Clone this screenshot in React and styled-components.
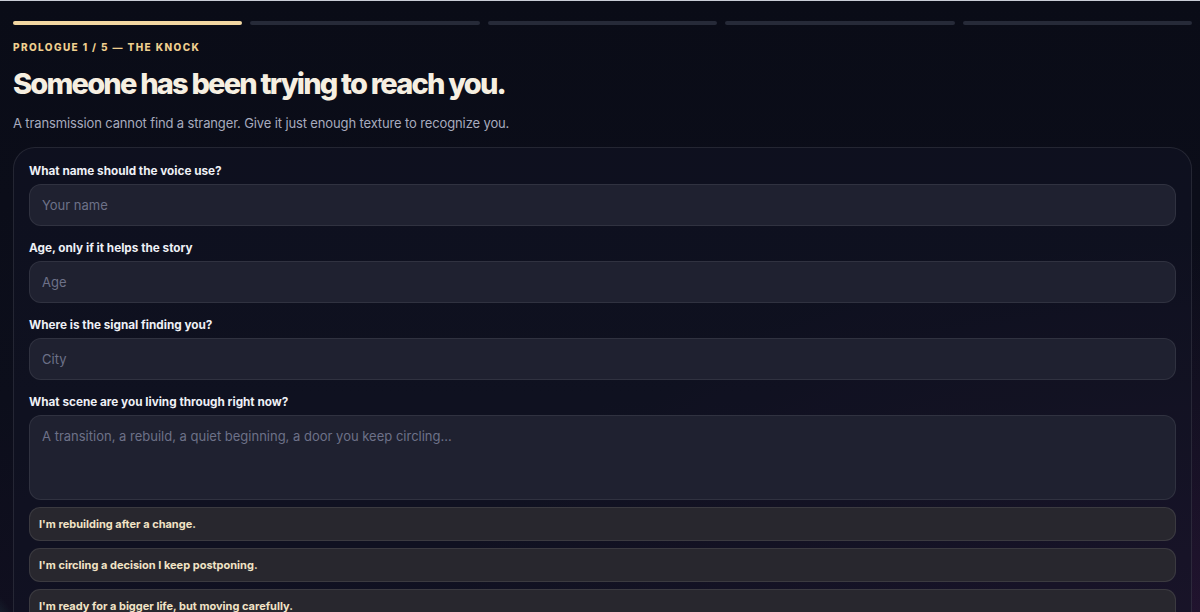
import React from "react";
import styled, { createGlobalStyle } from "styled-components";

const GlobalStyle = createGlobalStyle`
  html, body {
    margin: 0;
    height: 100%;
    background: #0a0c17;
  }
  body {
    border-top: 1px solid #c9ccd6;
    overflow: hidden;
    font-family: Inter, "Noto Sans", sans-serif;
    -webkit-font-smoothing: antialiased;
  }
  * {
    box-sizing: border-box;
  }
`;

const Page = styled.div`
  min-height: 611px;
  padding: 20px 8px 0 13px;
  background:
    radial-gradient(circle at -40px 640px, rgba(70, 150, 140, 0.55) 0, rgba(70, 150, 140, 0) 60px),
    radial-gradient(ellipse at 100% 100%, rgba(70, 30, 80, 0.35) 0, rgba(70, 30, 80, 0) 45%),
    linear-gradient(180deg, #0a0c17 0%, #0c0e1b 60%, #110f20 100%);
`;

const Progress = styled.div`
  display: grid;
  grid-template-columns: repeat(5, 1fr);
  gap: 8px;
`;

const Segment = styled.div`
  height: 4px;
  border-radius: 2px;
  background: ${(p) => (p.$active ? "#f2d7a2" : "#262a38")};
`;

const Eyebrow = styled.p`
  margin: 16px 0 0;
  font-size: 10px;
  line-height: 12px;
  font-weight: 800;
  letter-spacing: 0.14em;
  text-transform: uppercase;
  color: #efcf8f;
`;

const Title = styled.h1`
  margin: 13px 0 0;
  font-size: 29px;
  line-height: 36px;
  font-weight: 800;
  letter-spacing: -0.062em;
  color: #f6efe1;
`;

const Lead = styled.p`
  margin: 12px 0 0;
  font-size: 13px;
  line-height: 18px;
  letter-spacing: -0.01em;
  color: #a7abbe;
`;

const Card = styled.div`
  margin-top: 15px;
  padding: 16px 15px 40px;
  border: 1px solid rgba(255, 255, 255, 0.09);
  border-radius: 22px;
  background: rgba(18, 20, 36, 0.55);
  display: flex;
  flex-direction: column;
  gap: 15px;
`;

const Field = styled.label`
  display: flex;
  flex-direction: column;
  gap: 6px;
`;

const Label = styled.span`
  font-size: 11.75px;
  line-height: 14px;
  font-weight: 700;
  color: #eef0f6;
`;

const Input = styled.input`
  height: 42px;
  padding: 0 12px;
  border: 1px solid rgba(255, 255, 255, 0.08);
  border-radius: 12px;
  background: #1f2130;
  color: #eef0f6;
  font-family: inherit;
  font-size: 13px;
  outline: none;

  &::placeholder {
    color: #6d7188;
  }
`;

const TextArea = styled.textarea`
  height: 85px;
  padding: 11px 12px;
  border: 1px solid rgba(255, 255, 255, 0.08);
  border-radius: 12px;
  background: #1f2130;
  color: #eef0f6;
  font-family: inherit;
  font-size: 13px;
  line-height: 18px;
  resize: none;
  outline: none;

  &::placeholder {
    color: #6d7188;
  }
`;

const Suggestions = styled.div`
  display: flex;
  flex-direction: column;
  gap: 7px;
  margin-top: -8px;
`;

const Chip = styled.button`
  height: 34px;
  padding: 0 9px;
  text-align: left;
  border: 1px solid rgba(255, 255, 255, 0.09);
  border-radius: 11px;
  background: #28272e;
  color: #f1e3c6;
  font-family: inherit;
  font-size: 11px;
  font-weight: 700;
  cursor: pointer;
`;

const steps = [true, false, false, false, false];

const fields = [
  { label: "What name should the voice use?", placeholder: "Your name" },
  { label: "Age, only if it helps the story", placeholder: "Age" },
  { label: "Where is the signal finding you?", placeholder: "City" },
];

const scenes = [
  "I'm rebuilding after a change.",
  "I'm circling a decision I keep postponing.",
  "I'm ready for a bigger life, but moving carefully.",
];

export default function App() {
  return (
    <>
      <GlobalStyle />
      <Page>
        <Progress>
          {steps.map((active, i) => (
            <Segment key={i} $active={active} />
          ))}
        </Progress>
        <Eyebrow>Prologue 1 / 5 — The Knock</Eyebrow>
        <Title>Someone has been trying to reach you.</Title>
        <Lead>
          A transmission cannot find a stranger. Give it just enough texture to recognize you.
        </Lead>
        <Card>
          {fields.map((f) => (
            <Field key={f.label}>
              <Label>{f.label}</Label>
              <Input placeholder={f.placeholder} />
            </Field>
          ))}
          <Field>
            <Label>What scene are you living through right now?</Label>
            <TextArea placeholder="A transition, a rebuild, a quiet beginning, a door you keep circling..." />
          </Field>
          <Suggestions>
            {scenes.map((s) => (
              <Chip key={s} type="button">
                {s}
              </Chip>
            ))}
          </Suggestions>
        </Card>
      </Page>
    </>
  );
}
